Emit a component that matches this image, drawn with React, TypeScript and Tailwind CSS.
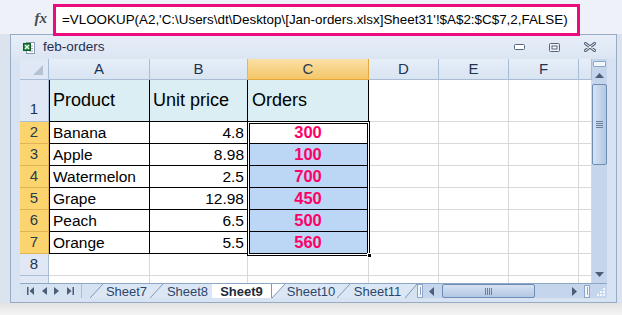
import React from "react";

const data = [
  { n: 2, a: "Banana", b: "4.8", c: "300" },
  { n: 3, a: "Apple", b: "8.98", c: "100" },
  { n: 4, a: "Watermelon", b: "2.5", c: "700" },
  { n: 5, a: "Grape", b: "12.98", c: "450" },
  { n: 6, a: "Peach", b: "6.5", c: "500" },
  { n: 7, a: "Orange", b: "5.5", c: "560" },
];

const formula =
  "=VLOOKUP(A2,'C:\\Users\\dt\\Desktop\\[Jan-orders.xlsx]Sheet31'!$A$2:$C$7,2,FALSE)";

function FormulaBar() {
  return (
    <div className="flex h-[34px] items-start bg-[#eef2f8]">
      <div className="flex h-[36px] w-[53px] items-center justify-end pr-[6px]">
        <span className="font-['Liberation_Serif',serif] text-[15px] font-bold italic text-[#4a4a4a]">
          fx
        </span>
      </div>
      {/* highlighted formula (annotation box) */}
      <div className="relative z-10 mt-[4px] flex h-[32px] w-[527px] items-center border-[3px] border-[#ec0a7f] bg-white pl-[6px]">
        <span className="whitespace-nowrap text-[13.4px] text-black">{formula}</span>
      </div>
    </div>
  );
}

function TitleBar() {
  return (
    <div className="flex h-[24px] items-center bg-gradient-to-b from-[#e7eef8] to-[#dbe5f2] pl-[12px] pr-[20px]">
      <svg width="12" height="13" viewBox="0 0 12 13">
        <rect x="3.5" y="1.5" width="8" height="11" fill="#fff" stroke="#8a9bb3" />
        <line x1="6" y1="5" x2="10" y2="5" stroke="#9aaac0" />
        <line x1="6" y1="7.5" x2="10" y2="7.5" stroke="#9aaac0" />
        <line x1="6" y1="10" x2="10" y2="10" stroke="#9aaac0" />
        <rect x="0.5" y="2.5" width="7" height="7" fill="#1f8a3a" stroke="#0f5d24" />
        <path d="M2 4 L6 8 M6 4 L2 8" stroke="#fff" strokeWidth="1.4" />
      </svg>
      <span className="ml-[8px] text-[13.5px] text-[#1e3150]">feb-orders</span>
      <div className="ml-auto flex items-center gap-[24px]">
        <svg width="11" height="6" viewBox="0 0 11 6">
          <rect x="0.5" y="0.5" width="10" height="5" rx="1" fill="#fff" stroke="#56657c" />
        </svg>
        <svg width="11" height="9" viewBox="0 0 11 9">
          <rect x="0.5" y="0.5" width="10" height="8" rx="1" fill="#eef2f8" stroke="#56657c" />
          <rect x="3" y="3" width="5" height="3" fill="#fff" stroke="#56657c" strokeWidth="1" />
        </svg>
        <svg width="12" height="10" viewBox="0 0 12 10">
          <path d="M1.5 1.5 L10.5 8.5 M10.5 1.5 L1.5 8.5" stroke="#56657c" strokeWidth="3" strokeLinecap="round" />
          <path d="M1.5 1.5 L10.5 8.5 M10.5 1.5 L1.5 8.5" stroke="#fff" strokeWidth="1" strokeLinecap="round" />
        </svg>
      </div>
    </div>
  );
}

const hdr =
  "flex items-center justify-center border-r border-b border-[#a9bdd6] bg-gradient-to-b from-[#e6eef8] to-[#d9e4f2] text-[15px] text-[#1f3453]";
const hdrSel =
  "flex items-center justify-center border-r border-b border-[#e5a83f] bg-gradient-to-b from-[#fbe0a6] to-[#f4c664] text-[15px] text-[#2a3a4f]";
const rowHdr =
  "flex items-center justify-center border-r border-b border-[#a9bdd6] bg-[#dfe8f4] text-[15px] text-[#1f3453]";
const rowHdrSel =
  "flex items-center justify-center border-r border-b border-[#e2b355] bg-[#fcd46d] text-[15px] text-[#2a3a4f]";
const grid = "border-r border-b border-[#d9d9d9] bg-white";

function Sheet() {
  return (
    <div className="relative grid h-[224px] w-[572px] grid-cols-[29px_101px_98px_121px_70px_70px_70px_13px] grid-rows-[21px_42px_22px_22px_22px_22px_22px_22px_22px_7px] overflow-hidden">
      {/* column headers */}
      <div className="relative border-r border-b border-[#a9bdd6] bg-[#dfe8f4]">
        <svg className="absolute right-[5px] bottom-[4px]" width="10" height="10" viewBox="0 0 10 10">
          <polygon points="10,0 10,10 0,10" fill="#b4c2d4" />
        </svg>
      </div>
      <div className={hdr}>A</div>
      <div className={hdr}>B</div>
      <div className={hdrSel}>C</div>
      <div className={hdr}>D</div>
      <div className={hdr}>E</div>
      <div className={hdr}>F</div>
      <div className={hdr}></div>

      {/* row 1 */}
      <div className={`${rowHdr} items-end pb-[1px]`}>1</div>
      <div className="flex items-center border-l border-r border-b border-black bg-[#daeef3] pl-[3px] text-[18px]">
        Product
      </div>
      <div className="flex items-center border-r border-b border-black bg-[#daeef3] pl-[3px] text-[18px]">
        Unit price
      </div>
      <div className="flex items-center border-r border-b border-black bg-[#daeef3] pl-[4px] text-[18px]">
        Orders
      </div>
      <div className={grid}></div>
      <div className={grid}></div>
      <div className={grid}></div>
      <div className={grid}></div>

      {data.map((r, i) => (
        <React.Fragment key={r.n}>
          <div className={rowHdrSel}>{r.n}</div>
          <div className="flex items-center border-l border-r border-b border-black bg-white pl-[3px] text-[15.5px]">
            {r.a}
          </div>
          <div className="flex items-center justify-end border-r border-b border-black bg-white pr-[3px] text-[15.5px]">
            {r.b}
          </div>
          <div
            className={`flex items-center justify-center border-r border-b border-black text-[16.5px] font-bold text-[#ff0066] ${
              i === 0 ? "bg-white" : "bg-[#bcd7f6]"
            }`}
          >
            {r.c}
          </div>
          <div className={grid}></div>
          <div className={grid}></div>
          <div className={grid}></div>
          <div className={grid}></div>
        </React.Fragment>
      ))}

      {/* row 8 */}
      <div className={rowHdr}>8</div>
      {[0, 1, 2, 3, 4, 5, 6].map((k) => (
        <div key={k} className={grid}></div>
      ))}
      {/* partial row 9 */}
      <div className="border-r border-[#a9bdd6] bg-[#dfe8f4]"></div>
      {[0, 1, 2, 3, 4, 5, 6].map((k) => (
        <div key={k} className="border-r border-[#d9d9d9] bg-white"></div>
      ))}

      {/* selection C2:C7 */}
      <div className="pointer-events-none absolute left-[227px] top-[62px] h-[135px] w-[123px] border border-black shadow-[inset_0_0_0_1px_#fff,inset_0_0_0_2px_#000]">
        <div className="absolute -right-[3px] -bottom-[3px] h-[5px] w-[5px] border border-white bg-black"></div>
      </div>
    </div>
  );
}

function VScroll() {
  return (
    <div className="flex h-[224px] w-[15px] flex-col items-center bg-[#c5d6ec]">
      <div className="mt-[2px] h-[6px] w-[13px] rounded-[1px] border border-[#8ea6c6] bg-[#f2f6fb]"></div>
      <svg className="mt-[6px]" width="9" height="5" viewBox="0 0 9 5">
        <polygon points="4.5,0 9,5 0,5" fill="#4c5d78" />
      </svg>
      <div className="mt-[6px] flex h-[81px] w-[15px] items-center justify-center rounded-[2px] border border-[#6f8db4] bg-gradient-to-r from-[#d5e2f2] to-[#b3c8e3]">
        <div className="flex flex-col gap-[1px]">
          <div className="h-[1px] w-[7px] bg-[#6b7f9c]"></div>
          <div className="h-[1px] w-[7px] bg-[#6b7f9c]"></div>
          <div className="h-[1px] w-[7px] bg-[#6b7f9c]"></div>
          <div className="h-[1px] w-[7px] bg-[#6b7f9c]"></div>
        </div>
      </div>
      <svg className="mt-auto mb-[6px]" width="9" height="5" viewBox="0 0 9 5">
        <polygon points="0,0 9,0 4.5,5" fill="#4c5d78" />
      </svg>
    </div>
  );
}

function Slant({ left = "#dce7f5", right = "#dce7f5", w = 13 }: { left?: string; right?: string; w?: number }) {
  return (
    <svg width={w} height="14" viewBox={`0 0 ${w} 14`} className="shrink-0">
      <rect width={w} height="14" fill={left} />
      <polygon points={`0,14 ${w},0 ${w},14`} fill={right} />
      <line x1="0" y1="14" x2={w} y2="0" stroke="#8197b6" strokeWidth="1" />
    </svg>
  );
}

function Tab({ label, w, active = false }: { label: string; w: number; active?: boolean }) {
  return (
    <div
      style={{ width: w }}
      className={`flex h-[14px] shrink-0 items-center justify-center text-[13px] leading-none ${
        active
          ? "border-r border-[#8197b6] bg-white font-bold text-[#1e2a3a]"
          : "bg-[#dce7f5] text-[#2c4669]"
      }`}
    >
      {label}
    </div>
  );
}

function TabBar() {
  return (
    <div className="flex h-[15px] w-[587px] border-t border-[#8ea6c6] bg-[#d5e2f1]">
      {/* navigation */}
      <div className="flex h-[14px] w-[62px] items-center justify-around border-r border-[#a9bdd6] px-[3px]">
        <svg width="7" height="8" viewBox="0 0 7 8">
          <rect x="0" y="0" width="1.5" height="8" fill="#4c5d78" />
          <polygon points="7,0 7,8 2.5,4" fill="#4c5d78" />
        </svg>
        <svg width="5" height="8" viewBox="0 0 5 8">
          <polygon points="5,0 5,8 0,4" fill="#4c5d78" />
        </svg>
        <svg width="5" height="8" viewBox="0 0 5 8">
          <polygon points="0,0 0,8 5,4" fill="#4c5d78" />
        </svg>
        <svg width="7" height="8" viewBox="0 0 7 8">
          <polygon points="0,0 0,8 4.5,4" fill="#4c5d78" />
          <rect x="5.5" y="0" width="1.5" height="8" fill="#4c5d78" />
        </svg>
      </div>
      <div className="w-[8px]"></div>
      <Slant left="#d5e2f1" />
      <Tab label="Sheet7" w={47} />
      <Slant />
      <Tab label="Sheet8" w={49} />
      <Tab label="Sheet9" w={60} active />
      <Slant left="#ffffff" />
      <Tab label="Sheet10" w={52} />
      <Slant />
      <Tab label="Sheet11" w={55} />
      <Slant right="#d5e2f1" w={12} />
      {/* horizontal scroll */}
      <div className="flex h-[14px] w-[6px] items-center justify-center border border-[#8ea6c6] bg-[#f2f6fb]">
        <div className="h-[8px] w-[1px] bg-[#8ea6c6]"></div>
      </div>
      <div className="flex h-[14px] w-[169px] items-center bg-[#c5d6ec]">
        <svg className="ml-[6px]" width="5" height="9" viewBox="0 0 5 9">
          <polygon points="5,0 5,9 0,4.5" fill="#4c5d78" />
        </svg>
        <div className="ml-[8px] flex h-[14px] w-[93px] items-center justify-center rounded-[2px] border border-[#6f8db4] bg-gradient-to-b from-[#d5e2f2] to-[#b3c8e3]">
          <div className="flex gap-[1px]">
            <div className="h-[7px] w-[1px] bg-[#6b7f9c]"></div>
            <div className="h-[7px] w-[1px] bg-[#6b7f9c]"></div>
            <div className="h-[7px] w-[1px] bg-[#6b7f9c]"></div>
            <div className="h-[7px] w-[1px] bg-[#6b7f9c]"></div>
          </div>
        </div>
        <svg className="ml-auto mr-[7px]" width="5" height="9" viewBox="0 0 5 9">
          <polygon points="0,0 0,9 5,4.5" fill="#4c5d78" />
        </svg>
        <div className="mr-[2px] flex h-[13px] w-[6px] items-center justify-center border border-[#8ea6c6] bg-[#f2f6fb]">
          <div className="h-[8px] w-[1px] bg-[#8ea6c6]"></div>
        </div>
      </div>
      {/* size grip */}
      <div className="flex h-[14px] w-[15px] items-end justify-end bg-[#c5d6ec] p-[2px]">
        <svg width="9" height="9" viewBox="0 0 9 9">
          <rect x="7" y="1" width="2" height="2" fill="#f4f7fb" />
          <rect x="4" y="4" width="2" height="2" fill="#f4f7fb" />
          <rect x="7" y="4" width="2" height="2" fill="#f4f7fb" />
          <rect x="1" y="7" width="2" height="2" fill="#f4f7fb" />
          <rect x="4" y="7" width="2" height="2" fill="#f4f7fb" />
          <rect x="7" y="7" width="2" height="2" fill="#f4f7fb" />
        </svg>
      </div>
    </div>
  );
}

export default function App() {
  return (
    <div className="h-[315px] w-[622px] overflow-hidden bg-[#dbe3ee] font-['Liberation_Sans',Arial,sans-serif] text-black">
      <FormulaBar />
      <div className="ml-[10px] h-[269px] w-[607px] border border-[#98abc4] bg-[#d7e3f2]">
        <TitleBar />
        <div className="px-[9px]">
          <div className="flex">
            <Sheet />
            <VScroll />
          </div>
          <TabBar />
        </div>
      </div>
      <div className="h-[12px] bg-gradient-to-b from-[#e2e2e2] to-[#f4f4f4]"></div>
    </div>
  );
}
